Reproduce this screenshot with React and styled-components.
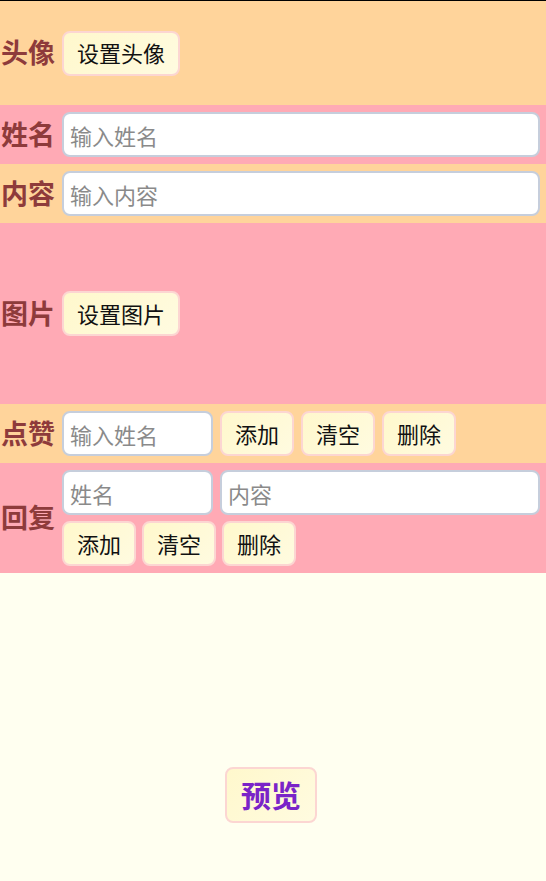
import React from "react";
import styled, { createGlobalStyle } from "styled-components";

const Global = createGlobalStyle`
    html, body {
        margin: 0;
        padding: 0;
        background: #fffff0;
        font-family: "Noto Sans CJK SC", "Noto Sans", sans-serif;
    }
    #root {
        border-top: 1px solid #000;
    }
`;

const Form = styled.div`
    display: flex;
    flex-direction: column;
`;

const Row = styled.div`
    display: flex;
    align-items: center;
    gap: 7px;
    box-sizing: border-box;
    padding: 7px 6px 7px 1px;
    min-height: ${(p) => p.height || 59}px;
    background: ${(p) => (p.alt ? "#ffaab5" : "#ffd49b")};
`;

const Label = styled.div`
    flex: none;
    width: 54px;
    padding-bottom: 3px;
    font-size: 27px;
    font-weight: bold;
    line-height: 1;
    color: #8e3b3b;
    white-space: nowrap;
`;

const Fields = styled.div`
    flex: 1;
    display: flex;
    flex-direction: column;
    gap: 6px;
`;

const Line = styled.div`
    display: flex;
    gap: ${(p) => p.gap || 7}px;
`;

const Input = styled.input`
    box-sizing: border-box;
    height: 45px;
    width: ${(p) => (p.narrow ? "151px" : "auto")};
    flex: ${(p) => (p.narrow ? "none" : "1")};
    min-width: 0;
    padding: 0 6px;
    font-family: inherit;
    font-size: 22px;
    border: 2px solid #c6cedc;
    border-radius: 8px;
    background: #fff;
    outline: none;
    &::placeholder {
        color: #8a8a8a;
    }
`;

const Button = styled.button`
    flex: none;
    box-sizing: border-box;
    height: 45px;
    padding: 0 13px 2px;
    font-family: inherit;
    font-size: 22px;
    color: #111;
    background: linear-gradient(135deg, #fff8cc, #fffbe0);
    border: 2px solid #fcd6d2;
    border-radius: 8px;
    cursor: pointer;
`;

const Footer = styled.div`
    display: flex;
    justify-content: center;
    padding: 194px 4px 40px 0;
`;

const PreviewButton = styled(Button)`
    height: 56px;
    padding: 0 14px 2px;
    font-size: 30px;
    font-weight: bold;
    color: #7a24c8;
`;

export default function App() {
    return (
        <>
            <Global />
            <Form>
                <Row height={104}>
                    <Label>头像</Label>
                    <Button>设置头像</Button>
                </Row>
                <Row alt>
                    <Label>姓名</Label>
                    <Input placeholder="输入姓名" />
                </Row>
                <Row>
                    <Label>内容</Label>
                    <Input placeholder="输入内容" />
                </Row>
                <Row alt height={181}>
                    <Label>图片</Label>
                    <Button>设置图片</Button>
                </Row>
                <Row>
                    <Label>点赞</Label>
                    <Input narrow placeholder="输入姓名" />
                    <Button>添加</Button>
                    <Button>清空</Button>
                    <Button>删除</Button>
                </Row>
                <Row alt>
                    <Label>回复</Label>
                    <Fields>
                        <Line>
                            <Input narrow placeholder="姓名" />
                            <Input placeholder="内容" />
                        </Line>
                        <Line gap={6}>
                            <Button>添加</Button>
                            <Button>清空</Button>
                            <Button>删除</Button>
                        </Line>
                    </Fields>
                </Row>
            </Form>
            <Footer>
                <PreviewButton>预览</PreviewButton>
            </Footer>
        </>
    );
}
